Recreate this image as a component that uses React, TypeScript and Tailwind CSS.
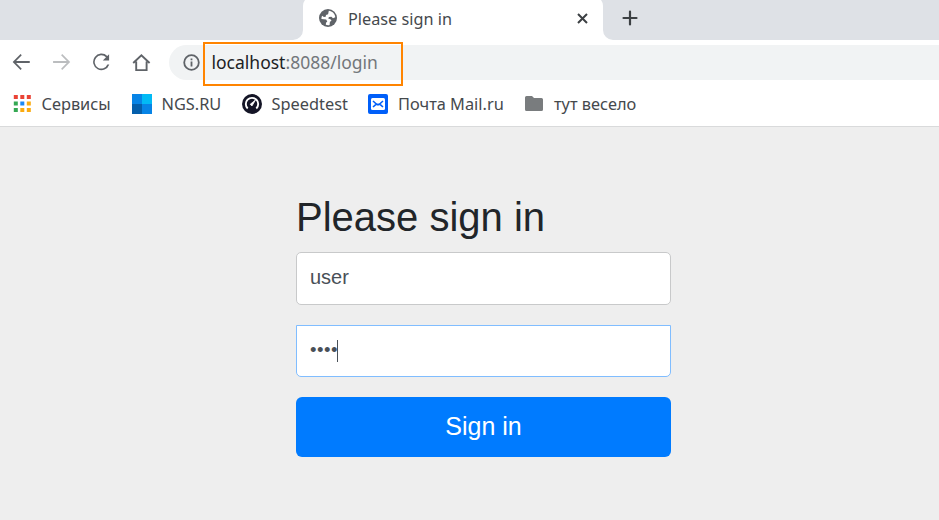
import React from "react";

const UI = "font-['Noto_Sans','Open_Sans',sans-serif]";

function TabStrip() {
  return (
    <div className="flex h-10 items-stretch bg-[#dee1e6] overflow-hidden">
      <div className="w-[303px] shrink-0" />
      <div className="relative -mt-1 flex h-11 w-[300px] shrink-0 items-center rounded-t-[10px] bg-white pl-4 pt-[2px]">
        <svg className="absolute bottom-0 -left-[10px]" width="10" height="10"><path d="M10 0A10 10 0 0 1 0 10H10Z" fill="#fff" /></svg>
        <svg className="absolute bottom-0 -right-[10px]" width="10" height="10"><path d="M0 0A10 10 0 0 0 10 10H0Z" fill="#fff" /></svg>
        <svg className="-ml-px -mt-[2px] h-5 w-5" viewBox="0 0 20 20">
          <circle cx="10" cy="10" r="9" fill="#5f6368" />
          <path d="M10.800 2.800c3.500.3 6.200 3 6.500 6.500l-2.300 1-1.600-1.500-2.400.2-.8 1.600 2.300.7 1 1.500-1.600 1-.3 3.200c-1.300.4-2.700.2-3.800-.3l.2-2 1.300-1.200-1.200-2-4.700-.5c0-1.200.2-2.200.7-3.200l1.800 1.300 1.800-.3.300-1.900 2.100-.7z" fill="#fff" />
        </svg>
        <span className="ml-[10px] text-[16.250px] leading-5 text-[#45494d]">Please sign in</span>
        <svg className="absolute left-[274px] top-[17px]" width="11" height="11" stroke="#3c4043" strokeWidth="2"><path d="M1 1l9 9M10 1l-9 9" /></svg>
      </div>
      <svg className="ml-[19px] mt-[10px]" width="16" height="16" stroke="#3c4043" strokeWidth="2.200" strokeLinecap="round"><path d="M8 1.500v13M1.500 8h13" /></svg>
    </div>
  );
}

function Toolbar() {
  return (
    <div className="flex h-[45px] items-start pt-[5px]">
      <div className="flex h-[35px] w-[169px] shrink-0 items-center pb-[2px] pl-[11px] text-[#5f6368]">
        <svg width="20" height="20" viewBox="0 0 24 24" fill="currentColor"><path d="M22.500 10.800H6.130l6.790-6.890L11.500 2.500 2 12l9.500 9.500 1.410-1.410L6.130 13.200H22.500z" /></svg>
        <svg className="ml-5 text-[#bbbdbf]" width="20" height="20" viewBox="0 0 24 24" fill="currentColor"><path d="M2.500 10.800h16.370l-6.790-6.890L13.500 2.500 23 12l-9.500 9.500-1.410-1.410 6.780-6.890H2.500z" /></svg>
        <svg className="ml-5" width="20" height="20" viewBox="0 0 20 20" fill="currentColor"><path d="M16.300 4A8.300 8.300 0 1 0 18.300 12.500h-1.900A6.600 6.600 0 1 1 15 5.300L11.800 8.500H18.100V2.200Z" /></svg>
        <svg className="ml-5" width="20" height="20" viewBox="0 0 20 20" fill="none" stroke="currentColor" strokeWidth="1.900"><path d="M2.200 11 10.400 3.300l8.200 7.700M5.200 9.500v8.600h10.400V9.500" /></svg>
      </div>
      <div className="flex h-[35px] grow items-center rounded-l-full bg-[#f1f3f4] pl-[14px]">
        <svg className="-ml-px -mt-px" width="18" height="18" viewBox="0 0 18 18" fill="none" stroke="#5f6368" strokeWidth="1.800"><circle cx="9.500" cy="9.500" r="7.300" /><path d="M9.500 8.500v5M9.500 5.500v1.700" /></svg>
        <div className="ml-[3px] mt-[2px] flex h-11 w-[200px] items-center border-2 border-[#ff8400] pb-[3px] pl-[6.500px] text-[17.500px] leading-6 text-[#202124]">
          <span>localhost<span className="text-[#73777b]">:8088/login</span></span>
        </div>
      </div>
    </div>
  );
}

function AppsIcon() {
  const colors = ["#ea4335", "#ea4335", "#ea4335", "#34a853", "#1a88f5", "#fbab10", "#34a853", "#fbab10", "#fbab10"];
  return (
    <svg className="-mt-[2px]" width="18" height="18">
      {colors.map((c, i) => <rect key={i} x={0.8 + (i % 3) * 6.500} y={1 + Math.floor(i / 3) * 6.500} width="4" height="4" fill={c} />)}
    </svg>
  );
}

function Bookmarks() {
  return (
    <div className="flex h-[41px] items-center pb-[4px] text-[16.350px] leading-5 text-[#45494d]">
      <div className="flex w-[119px] shrink-0 items-center gap-[10.500px] pl-[13px]"><AppsIcon /><span>Сервисы</span></div>
      <div className="flex w-[110px] shrink-0 items-center gap-[9.500px] pl-[13px]">
        <svg width="20" height="20"><path fill="#0784e6" d="M0 0h20v20H0z" /><path fill="#02baf5" d="M10 0h10v10H10z" /><path fill="#045fac" d="M0 10h10v10H0z" /></svg>
        <span>NGS.RU</span>
      </div>
      <div className="flex w-[126px] shrink-0 items-center gap-[9.500px] pl-[13px]">
        <svg width="20" height="20" viewBox="0 0 20 20" fill="none"><circle cx="10" cy="10" r="10" fill="#141526" /><path d="M5.700 14.500A6.200 6.200 0 1 1 14.300 14.500" stroke="#fff" strokeWidth="1.900" /><path d="M8.200 10.300 13.500 6 9.900 12Z" fill="#fff" stroke="#fff" strokeWidth=".8" /></svg>
        <span>Speedtest</span>
      </div>
      <div className="flex w-[157px] shrink-0 items-center gap-[10px] pl-[13px]">
        <svg width="20" height="20" viewBox="0 0 20 20" fill="none"><rect width="20" height="20" rx="2" fill="#005ff9" /><rect x="3" y="4" width="14" height="12" rx="1.500" fill="#fff" /><path d="M5 7l3.300 3q1.700 1.300 3.400 0L15 7M5 13l2.700-2.400M15 13l-2.700-2.400" stroke="#005ff9" strokeWidth="1.600" /></svg>
        <span>Почта Mail.ru</span>
      </div>
      <div className="flex items-center gap-[11px] pl-[13px]">
        <svg width="18" height="15" viewBox="0 0 18 15"><path d="M1.500 0H7l2 2h7.500Q18 2 18 3.500v10Q18 15 16.500 15h-15Q0 15 0 13.500v-12Q0 0 1.500 0" fill="#797c7e" /></svg>
        <span>тут весело</span>
      </div>
    </div>
  );
}

export default function App() {
  return (
    <div className={`flex h-[520px] w-[939px] flex-col overflow-hidden bg-[#eee] ${UI}`}>
      <TabStrip />
      <div className="h-[87px] shrink-0 border-b border-[#d9dadb] bg-white">
        <Toolbar />
        <Bookmarks />
      </div>
      <main className="ml-[296px] flex w-[375px] flex-col pt-[66px] font-['Liberation_Sans',Arial,sans-serif]">
        <h2 className="h-[59px] text-[40px] leading-[48px] text-[#212529]">Please sign in</h2>
        <div className="flex h-[53px] items-center rounded-[5px] border border-[#c8c9ca] bg-white px-[13px] pb-[3px] text-[20px] text-[#495057]">user</div>
        <div className="mt-5 flex h-[52px] items-center rounded-b-[5px] border border-[#80bdff] bg-white px-[13px] text-[20px] text-[#495057]">
          <span className="-mt-[2px] w-[27px] text-[18.500px] tracking-[0.500px]">••••</span>
          <span className="h-[22px] w-px bg-[#495057]" />
        </div>
        <button className="mt-5 h-[60px] rounded-[6px] bg-[#007bff] text-[25px] text-white">Sign in</button>
      </main>
    </div>
  );
}
